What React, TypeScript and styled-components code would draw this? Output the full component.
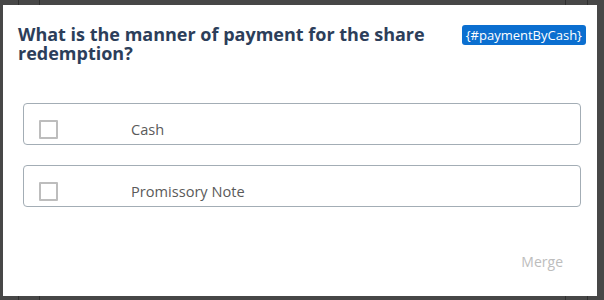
import React from "react";
import styled, { createGlobalStyle } from "styled-components";

const Global = createGlobalStyle`
  html, body { margin: 0; padding: 0; }
  body {
    background: #474747;
    font-family: "Open Sans", "Noto Sans", sans-serif;
    width: 604px;
    height: 300px;
    overflow: hidden;
  }
`;

const Backdrop = styled.div`
  position: relative;
  width: 604px;
  height: 300px;
  background: #474747;
  display: flex;
  padding: 5px 7px 4px 3px;
  box-sizing: border-box;
`;

const GridLine = styled.div<{ $x: number }>`
  position: absolute;
  top: 0;
  bottom: 0;
  left: ${(p) => p.$x}px;
  width: 1px;
  background: #2f2f2f;
`;

const Modal = styled.div`
  position: relative;
  z-index: 1;
  flex: 1;
  background: #fff;
  display: flex;
  flex-direction: column;
`;

const Header = styled.div`
  display: flex;
  align-items: flex-start;
  justify-content: space-between;
  padding: 20px 11px 0 15px;
`;

const Title = styled.h2`
  margin: 0;
  font-size: 18px;
  line-height: 19px;
  font-weight: 700;
  color: #2c3e5a;
  width: 430px;
`;

const Badge = styled.span`
  background: #0b6fd0;
  color: #fff;
  font-size: 13px;
  line-height: 20px;
  padding: 0 4px;
  border-radius: 3px;
  white-space: nowrap;
`;

const Options = styled.div`
  display: flex;
  flex-direction: column;
  gap: 20px;
  padding: 40px 16px 0 20px;
`;

const Option = styled.label`
  display: flex;
  align-items: center;
  height: 42px;
  box-sizing: border-box;
  border: 1px solid #a3adb5;
  border-radius: 4px;
  padding: 10px 0 0 15px;
  cursor: pointer;
`;

const Box = styled.span`
  width: 19px;
  height: 19px;
  box-sizing: border-box;
  border: 2px solid #bdbdbd;
  border-radius: 1px;
  flex: none;
  margin-right: 73px;
`;

const Label = styled.span`
  font-size: 14.6px;
  color: #5a5a5a;
`;

const Footer = styled.div`
  margin-top: auto;
  display: flex;
  justify-content: flex-end;
  padding: 0 34px 25px 0;
`;

const MergeButton = styled.span`
  font-size: 14px;
  color: #bdbdbd;
`;

export default function App() {
  return (
    <>
      <Global />
      <Backdrop>
        <GridLine $x={18} />
        <GridLine $x={39} />
        <GridLine $x={565} />
        <GridLine $x={587} />
        <Modal>
          <Header>
            <Title>What is the manner of payment for the share redemption?</Title>
            <Badge>{"{#paymentByCash}"}</Badge>
          </Header>
          <Options>
            <Option>
              <Box />
              <Label>Cash</Label>
            </Option>
            <Option>
              <Box />
              <Label>Promissory Note</Label>
            </Option>
          </Options>
          <Footer>
            <MergeButton>Merge</MergeButton>
          </Footer>
        </Modal>
      </Backdrop>
    </>
  );
}
